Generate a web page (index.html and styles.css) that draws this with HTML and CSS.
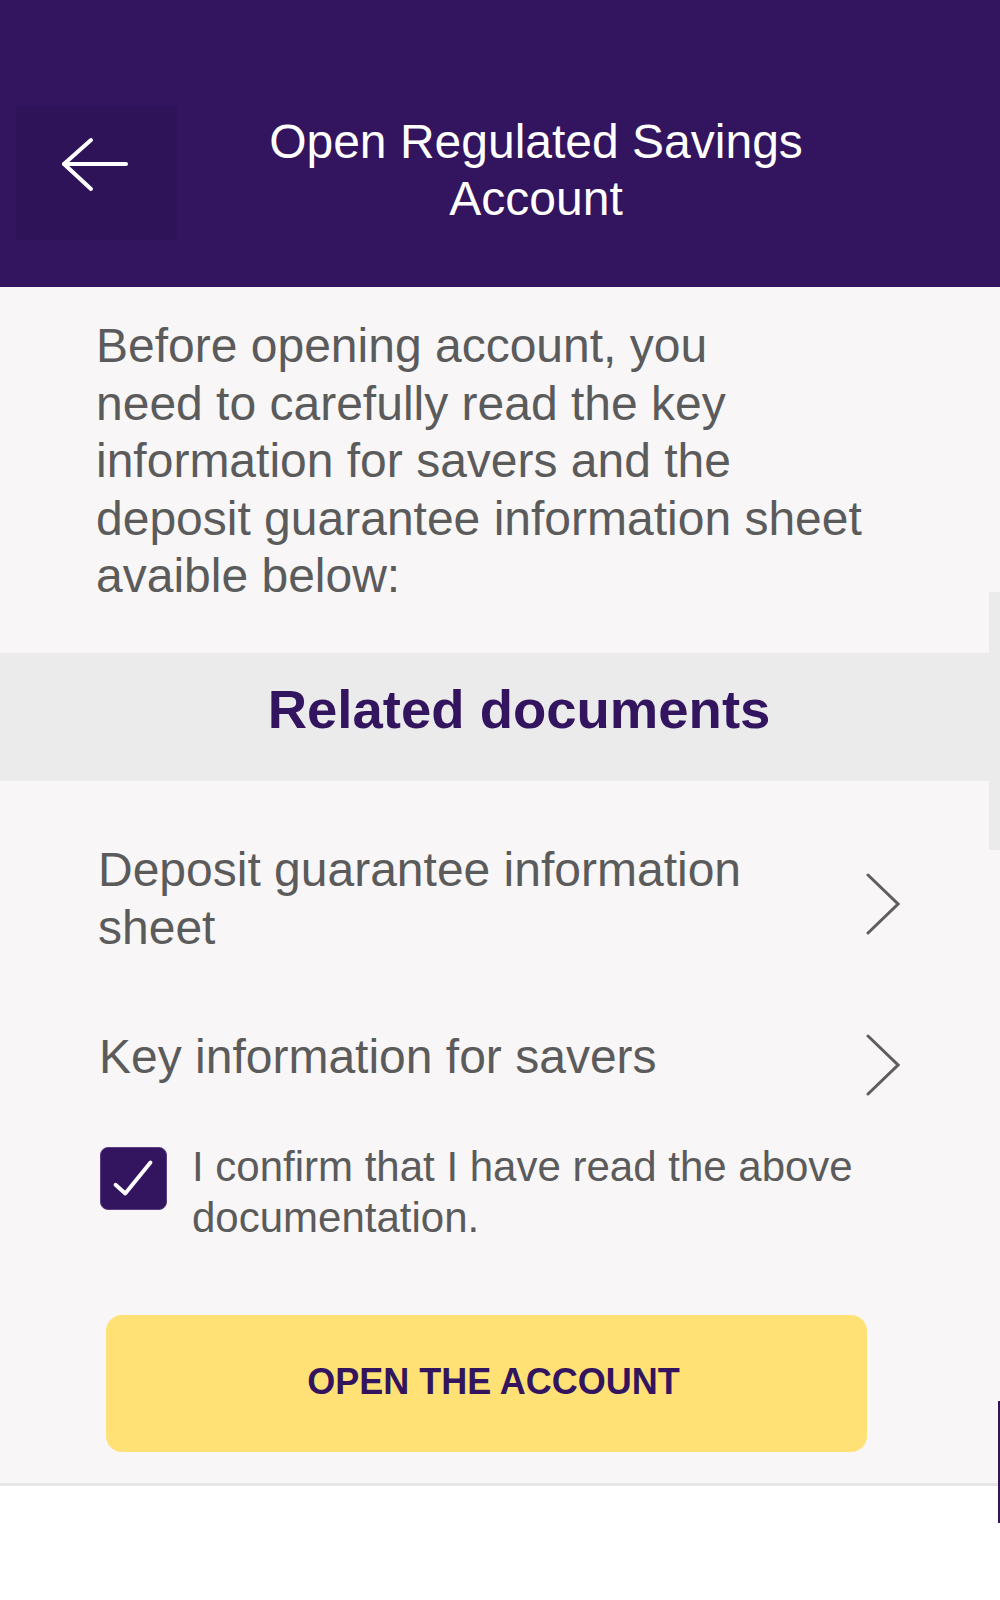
FILE: index.html
```html
<!DOCTYPE html>
<html lang="en">
<head>
<meta charset="utf-8">
<title>Open Regulated Savings Account</title>
<link rel="stylesheet" href="styles.css">
</head>
<body>
<div class="screen">
  <header class="topbar">
    <button class="back" aria-label="Back">
      <svg width="70" height="56" viewBox="0 0 70 56" fill="none" stroke="#ffffff" stroke-width="4" stroke-linecap="round" stroke-linejoin="round">
        <path d="M4 27 L66 27"/>
        <path d="M31 3 L4 27 L31 52"/>
      </svg>
    </button>
    <h1 class="title">Open Regulated Savings<br>Account</h1>
  </header>

  <main class="content">
    <p class="intro">Before opening account, you<br>need to carefully read the key information for savers and the deposit guarantee information sheet avaible below:</p>

    <div class="band">
      <h2 class="band-title">Related documents</h2>
    </div>

    <ul class="docs">
      <li class="doc">
        <span class="doc-text">Deposit guarantee information sheet</span>
        <svg class="chev" width="34" height="66" viewBox="0 0 34 66" fill="none" stroke="#5e5e5e" stroke-width="3" stroke-linecap="round" stroke-linejoin="miter"><path d="M2 4 L32 33 L2 62"/></svg>
      </li>
      <li class="doc doc-single">
        <span class="doc-text">Key information for savers</span>
        <svg class="chev" width="34" height="66" viewBox="0 0 34 66" fill="none" stroke="#5e5e5e" stroke-width="3" stroke-linecap="round" stroke-linejoin="miter"><path d="M2 4 L32 33 L2 62"/></svg>
      </li>
    </ul>

    <label class="confirm">
      <span class="check">
        <svg width="67" height="63" viewBox="0 0 67 63" fill="none" stroke="#ffffff" stroke-width="4" stroke-linecap="round" stroke-linejoin="round"><path d="M15 38 L25 47 L51 15"/></svg>
      </span>
      <span class="confirm-text">I confirm that I have read the above documentation.</span>
    </label>

    <div class="actions">
      <button class="cta">OPEN THE ACCOUNT</button>
    </div>
  </main>

  <footer class="bottom"></footer>

  <div class="scroll-strip"></div>
  <div class="edge-line"></div>
</div>
</body>
</html>
```

FILE: styles.css
```css
html, body {
  margin: 0;
  padding: 0;
}

body {
  font-family: "Liberation Sans", Arial, Helvetica, sans-serif;
  background: #ffffff;
}

.screen {
  position: relative;
  width: 1000px;
  height: 1600px;
  display: flex;
  flex-direction: column;
  overflow: hidden;
}

/* Header */
.topbar {
  height: 287px;
  box-sizing: border-box;
  background: #33145f;
  display: flex;
  align-items: flex-start;
  padding-top: 106px;
}

.back {
  width: 161px;
  height: 134px;
  margin-left: 16px;
  border: 0;
  padding: 0 0 16px 44px;
  background: #2f1359;
  display: flex;
  align-items: center;
  justify-content: flex-start;
  cursor: pointer;
}

.title {
  flex: 1;
  margin: 7px 105px 0 0;
  font-weight: 400;
  font-size: 48px;
  line-height: 57px;
  color: #ffffff;
  text-align: center;
}

/* Content */
.content {
  background: #f8f6f7;
  display: flex;
  flex-direction: column;
  flex: none;
  box-sizing: border-box;
  height: 1199px;
  border-bottom: 3px solid #e6e6e6;
}

.intro {
  margin: 0;
  padding: 30px 114px 48px 96px;
  font-size: 48px;
  line-height: 57.6px;
  color: #5b5b5b;
}

.band {
  height: 128px;
  background: #ebebeb;
  display: flex;
  align-items: center;
  justify-content: center;
  box-sizing: border-box;
  padding: 0 0 13px 38px;
}

.band-title {
  margin: 0;
  font-size: 54.5px;
  line-height: 64px;
  font-weight: 700;
  color: #33145f;
}

.docs {
  list-style: none;
  margin: 60px 0 0;
  padding: 0;
  display: flex;
  flex-direction: column;
  gap: 60px;
}

.doc {
  display: flex;
  align-items: center;
  padding: 0 100px 0 98px;
  cursor: pointer;
}

.doc-text {
  flex: 1;
  max-width: 700px;
  font-size: 48px;
  line-height: 57.6px;
  color: #5b5b5b;
}

.doc-single .doc-text {
  padding-left: 1px;
}

.chev {
  margin-left: auto;
  margin-top: 10px;
  flex: none;
}

.doc-single .chev {
  margin-top: 16px;
}

.confirm {
  display: flex;
  align-items: flex-start;
  margin-top: 44px;
  padding: 0 100px 0 100px;
  gap: 25px;
}

.check {
  flex: none;
  width: 67px;
  height: 63px;
  margin-top: 5px;
  box-sizing: border-box;
  border-radius: 8px;
  background: #33145f;
  border: 1px solid #5b3f86;
  display: flex;
  align-items: center;
  justify-content: center;
}

.check svg {
  display: block;
}

.confirm-text {
  font-size: 42px;
  line-height: 50.4px;
  color: #5b5b5b;
}

.actions {
  padding: 72px 0 0 106px;
}

.cta {
  width: 761px;
  height: 137px;
  border: 0;
  border-radius: 16px;
  background: #ffe176;
  color: #33145f;
  font-family: "Liberation Sans", Arial, Helvetica, sans-serif;
  font-weight: 700;
  font-size: 36px;
  padding: 0 0 2px 14px;
  cursor: pointer;
}

.bottom {
  flex: 1;
  background: #ffffff;
}

/* Overlay artifacts on the right edge */
.scroll-strip {
  position: absolute;
  left: 989px;
  top: 592px;
  width: 11px;
  height: 258px;
  background: #ebebeb;
}

.edge-line {
  position: absolute;
  left: 998px;
  top: 1401px;
  width: 2px;
  height: 122px;
  background: #33145f;
}
```
